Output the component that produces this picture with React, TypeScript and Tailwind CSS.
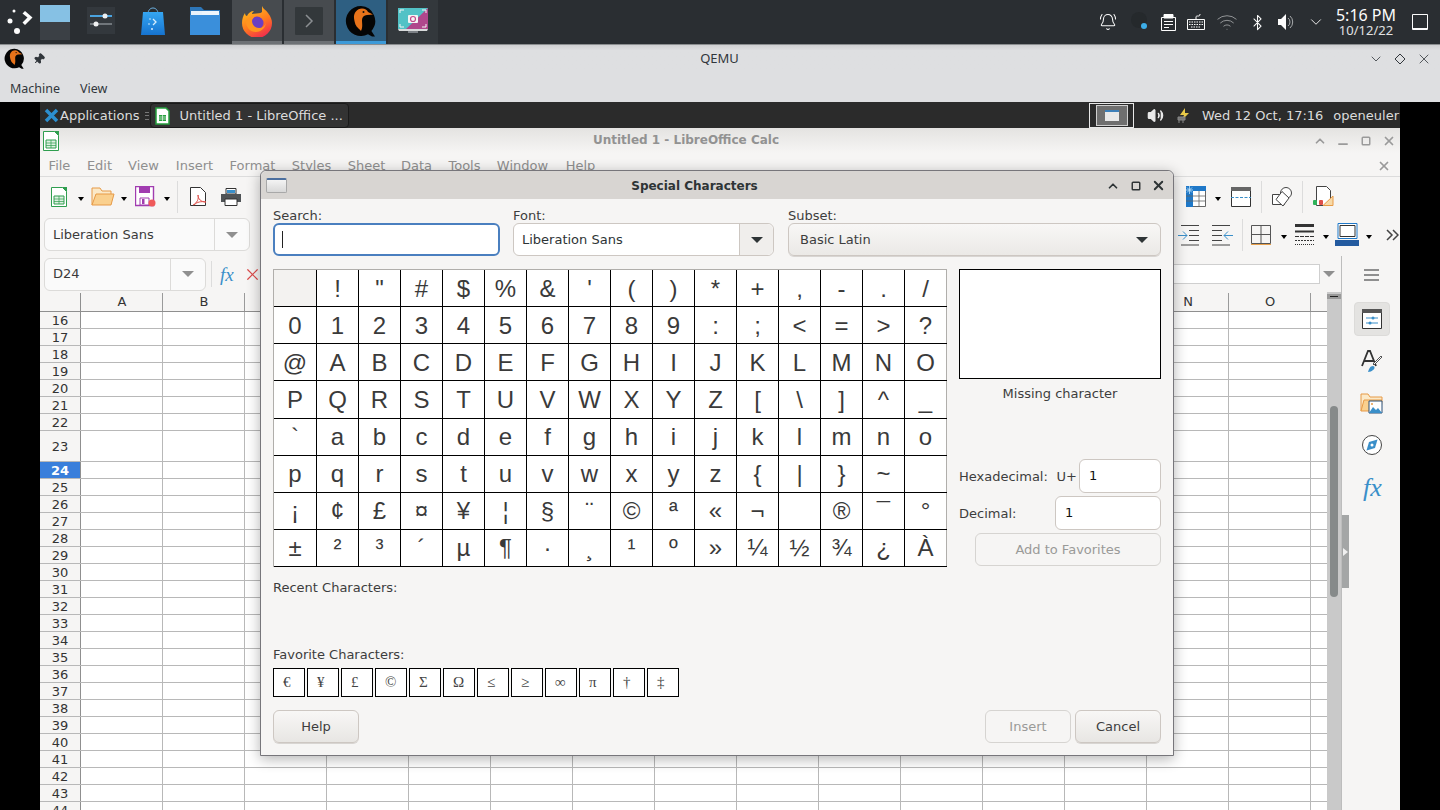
import { BellRing, Bluetooth, ChevronDown, ChevronUp, Minus, Pin, Square, Volume2, Wifi, X } from 'lucide-react'

const UI = "font-['DejaVu_Sans',sans-serif]"
const NOTO = "font-['Noto_Sans',sans-serif]"
const CHAR = "font-['Liberation_Sans',sans-serif]"
const SERIF = "font-['Liberation_Serif',serif]"

const CHAR_ROWS = [
  [' ', '!', '"', '#', '$', '%', '&', "'", '(', ')', '*', '+', ',', '-', '.', '/'],
  ['0', '1', '2', '3', '4', '5', '6', '7', '8', '9', ':', ';', '<', '=', '>', '?'],
  ['@', 'A', 'B', 'C', 'D', 'E', 'F', 'G', 'H', 'I', 'J', 'K', 'L', 'M', 'N', 'O'],
  ['P', 'Q', 'R', 'S', 'T', 'U', 'V', 'W', 'X', 'Y', 'Z', '[', '\\', ']', '^', '_'],
  ['`', 'a', 'b', 'c', 'd', 'e', 'f', 'g', 'h', 'i', 'j', 'k', 'l', 'm', 'n', 'o'],
  ['p', 'q', 'r', 's', 't', 'u', 'v', 'w', 'x', 'y', 'z', '{', '|', '}', '~', ' '],
  ['¡', '¢', '£', '¤', '¥', '¦', '§', '¨', '©', 'ª', '«', '¬', ' ', '®', '¯', '°'],
  ['±', '²', '³', '´', 'µ', '¶', '·', '¸', '¹', 'º', '»', '¼', '½', '¾', '¿', 'À'],
]
const FAVORITES = ['€', '¥', '£', '©', 'Σ', 'Ω', '≤', '≥', '∞', 'π', '†', '‡']
const COLUMNS = ['A', 'B', 'C', 'D', 'E', 'F', 'G', 'H', 'I', 'J', 'K', 'L', 'M', 'N', 'O', '']
const ROWS = Array.from({ length: 29 }, (_, i) => i + 16)
const MENU = [
  ['File', 'w-[39px]'],
  ['Edit', 'w-[41px]'],
  ['View', 'w-[47px]'],
  ['Insert', 'w-[55px]'],
  ['Format', 'w-[61px]'],
  ['Styles', 'w-[57px]'],
  ['Sheet', 'w-[53px]'],
  ['Data', 'w-[47px]'],
  ['Tools', 'w-[49px]'],
  ['Window', 'w-[67px]'],
  ['Help', 'w-[49px]'],
]

function QemuLogo({ size }: { size: number }) {
  return (
    <svg width={size} height={size} viewBox="0 0 32 32">
      <path d="M16 1a15 15 0 1 0 7 28.200l4 2.300h3l-3.600-5.600A15 15 0 0 0 16 1z" fill="#050505" />
      <path d="M9 13c-.5-5 3-9.500 8-9.500 3 0 5 1.500 6 3.500l5 2.500-6 .5c-3 .5-5 2-5 5 0 4 1 7-1 11-2-2.500-5-4-6-8-.6-2-.8-3.500-1-5z" fill="#e8731a" />
      <circle cx="18.500" cy="7" r="1" fill="#111" />
    </svg>
  )
}

function Launcher() {
  return (
    <svg width="32" height="32" viewBox="0 0 32 32" fill="#fcfcfc">
      <circle cx="10" cy="5" r="1.500" />
      <circle cx="6" cy="15" r="2.500" />
      <circle cx="13" cy="25" r="3" />
      <path d="M18.500 7.500 21 5l7.500 6.500-7.500 7.500-2.500-2.500 5-5z" />
    </svg>
  )
}

function Pager() {
  return (
    <div className="flex h-[35px] w-[30px] flex-col">
      <div className="h-[17px] bg-[#86c1e4]" />
      <div className="flex-1 bg-[#3b4045]" />
    </div>
  )
}

function SettingsIcon() {
  return (
    <svg width="30" height="30" viewBox="0 0 30 30">
      <rect x="1" y="1" width="28" height="27" fill="#33383d" />
      <path d="M4 10h22" stroke="#4aa3e0" strokeWidth="2" />
      <path d="M4 18h22" stroke="#70767b" strokeWidth="2" />
      <circle cx="19" cy="10" r="2.500" fill="#eff0f1" />
      <circle cx="10" cy="18" r="2.500" fill="#eff0f1" />
    </svg>
  )
}

function StoreIcon() {
  return (
    <svg width="26" height="30" viewBox="0 0 26 30">
      <defs>
        <linearGradient id="bag" x1="0" y1="0" x2="0" y2="1">
          <stop offset="0" stopColor="#35a6f2" />
          <stop offset="1" stopColor="#1673cf" />
        </linearGradient>
      </defs>
      <path d="M8 8c0-8 10-8 10 0" fill="none" stroke="#6fb6e8" strokeWidth="1" />
      <path d="M3 6h20l2 23H1z" fill="url(#bag)" />
      <path d="m13 13 3 3-3 3" fill="none" stroke="#d8eefc" strokeWidth="1.300" />
      <circle cx="10" cy="13" r=".8" fill="#d8eefc" />
      <circle cx="9" cy="18" r=".8" fill="#d8eefc" />
      <circle cx="12" cy="23" r="1" fill="#d8eefc" />
    </svg>
  )
}

function FolderIcon() {
  return (
    <svg width="32" height="30" viewBox="0 0 32 30">
      <path d="M1 1h11l3 3h16v25H1z" fill="#2d76b8" />
      <rect x="2" y="5" width="28" height="5" fill="#e9f3fb" />
      <path d="M1 9h12l2-2h16v22H1z" fill="#3a8fdb" />
      <rect x="13" y="5" width="17" height="4" fill="#eef6fc" />
    </svg>
  )
}

function FirefoxIcon() {
  return (
    <svg width="32" height="32" viewBox="0 0 32 32">
      <defs>
        <linearGradient id="fx" x1="0.2" y1="0" x2="0.7" y2="1">
          <stop offset="0" stopColor="#ffc21c" />
          <stop offset="0.55" stopColor="#ff7a1f" />
          <stop offset="1" stopColor="#f2294f" />
        </linearGradient>
      </defs>
      <path d="M21 1c1 3 4 4 6 7 3 4 4 7 4 10a15 15 0 0 1-30 0c0-4 1-7 3-10 0 2 1 3 2 3 1-3 4-5 7-5-1 1-2 2-2 3 4-1 8 0 10-2 0-2 0-4 0-6z" fill="url(#fx)" />
      <circle cx="16" cy="18" r="6.500" fill="#6b3fc2" />
      <path d="M5 17c2-4 5-6 10-6-2 1-4 3-4 5 0 4 3 7 7 7 3 0 6-2 7-5-1 6-6 9-10 9-6 0-10-5-10-10z" fill="#ff9520" />
    </svg>
  )
}

function KonsoleIcon() {
  return (
    <svg width="30" height="30" viewBox="0 0 30 30">
      <rect x="1" y="1" width="28" height="28" rx="1" fill="#33383b" />
      <path d="m12 9 6 6-6 6" fill="none" stroke="#8b8f92" strokeWidth="1.500" />
    </svg>
  )
}

function SpectacleIcon() {
  return (
    <svg width="32" height="28" viewBox="0 0 32 28">
      <rect x="1" y="1" width="30" height="21" fill="#52c2c6" />
      <path d="M31 1v21H9z" fill="#b0478c" />
      <path d="M1 22h30l-1 2H2z" fill="#d8dadb" />
      <path d="M11 24h10v2H11z" fill="#7b8085" />
      <path d="M3 6V3h4M25 3h4v3M3 17v3h4M29 17v3h-4" fill="none" stroke="#f4f4f4" />
      <rect x="11" y="8" width="10" height="8" rx="1" fill="#f4f4f4" />
      <circle cx="16" cy="12" r="2.500" fill="none" stroke="#c24a8a" strokeWidth="1.200" />
    </svg>
  )
}

function DockItem({ kind, children }: { kind?: 'open' | 'active' | 'idle'; children: React.ReactNode }) {
  let cls = 'border-b-[3px] border-transparent'
  if (kind === 'open') cls = 'bg-[#474b4f] border-b-[3px] border-[#6d7175]'
  if (kind === 'active') cls = 'bg-[#2e5f82] border-b-[3px] border-[#3d9ad8]'
  if (kind === 'idle') cls = 'bg-[#33383c] border-b-[3px] border-transparent'
  return <div className={`mx-px flex h-11 w-[50px] items-center justify-center ${cls}`}>{children}</div>
}

function TopPanel() {
  return (
    <div className="flex h-[45px] shrink-0 items-center bg-[#2a2e32] border-b border-[#8b8e90] text-[#fcfcfc]">
      <div className="flex w-10 justify-center"><Launcher /></div>
      <div className="flex w-[35px]"><Pager /></div>
      <DockItem><SettingsIcon /></DockItem>
      <DockItem><StoreIcon /></DockItem>
      <DockItem><FolderIcon /></DockItem>
      <DockItem kind="open"><FirefoxIcon /></DockItem>
      <DockItem kind="open"><KonsoleIcon /></DockItem>
      <DockItem kind="active"><QemuLogo size={32} /></DockItem>
      <DockItem kind="idle"><SpectacleIcon /></DockItem>
      <div className="ml-auto flex items-center">
        <div className="flex w-[30px] justify-center"><BellRing size={18} strokeWidth={1.4} /></div>
        <div className="relative flex h-5 w-8 justify-center">
          <span className="h-4 w-4 rounded-full bg-[#25292c]" />
          <span className="absolute left-[18px] top-[11px] h-[6px] w-[6px] rounded-full bg-[#3daee9]" />
        </div>
        <div className="flex w-[26px] justify-center">
          <svg width="15" height="17" viewBox="0 0 15 17" fill="none" stroke="#fcfcfc">
            <path d="M.5 3.500h14v13H.5z" />
            <path d="M3 .5h9V4H3z" fill="#fcfcfc" />
            <path d="M3 7.500h9M3 10.500h9M3 13.500h5" />
          </svg>
        </div>
        <div className="flex w-[30px] justify-center">
          <svg width="18" height="16" viewBox="0 0 18 16" fill="none" stroke="#fcfcfc">
            <path d="M.5 5.500h17v10H.5z" />
            <path d="M9 5V3c0-1 1-1 2-1s2 0 2-2" />
            <path d="M2 8h14M2 10.500h14M4 13h10" strokeDasharray="1.500 1" />
          </svg>
        </div>
        <div className="flex w-[31px] justify-center"><Wifi size={22} strokeWidth={1} className="text-[#9a9d9f]" /></div>
        <div className="flex w-[30px] justify-center"><Bluetooth size={17} strokeWidth={1.5} /></div>
        <div className="flex w-[29px] justify-center">
          <svg width="17" height="16" viewBox="0 0 17 16">
            <path d="M0 5h3l5-5v16l-5-5H0z" fill="#fcfcfc" />
            <path d="M10 4a5 5 0 0 1 0 8M12 2a8 8 0 0 1 0 12" fill="none" stroke="#a8abad" />
          </svg>
        </div>
        <div className="mr-[6px] flex w-[29px] justify-center"><ChevronDown size={18} strokeWidth={1.2} /></div>
        <div className={`flex w-[60px] shrink-0 flex-col items-center whitespace-nowrap leading-none ${NOTO}`}>
          <span className="text-[16px] leading-[17px]">5:16 PM</span>
          <span className="text-[13px] leading-[13px] text-[#e0e1e2]">10/12/22</span>
        </div>
        <div className="ml-[16px] mr-[12px] h-4 w-4 rounded-[1px] border border-b-2 border-[#fcfcfc]" />
      </div>
    </div>
  )
}

function QemuBar() {
  return (
    <div className={`flex h-[57px] shrink-0 flex-col bg-[#dedfe1] text-[#31363b] ${NOTO}`}>
      <div className="flex h-[27px] items-center bg-gradient-to-b from-[#cfd0d2] from-0% to-[#dedfe1] to-20%">
        <div className="ml-1 flex items-center gap-2">
          <QemuLogo size={21} />
          <Pin size={12} className="rotate-45 fill-[#31363b]" />
        </div>
        <span className="flex-1 pl-[26px] text-center text-[13px]">QEMU</span>
        <div className="mr-2 flex items-center gap-[8px]">
          <ChevronDown size={16} strokeWidth={1.2} />
          <svg width="16" height="14" viewBox="0 0 16 14" fill="none" stroke="#31363b"><path d="M8 2l5 5-5 5-5-5z" /></svg>
          <X size={16} strokeWidth={1.2} />
        </div>
      </div>
      <div className="flex flex-1 items-center gap-[20px] px-[10px] pt-[4px] text-[12.5px]">
        <span>Machine</span>
        <span>View</span>
      </div>
    </div>
  )
}

function XfcePanel() {
  return (
    <div className={`flex h-[26px] shrink-0 items-center bg-[#2b2b2b] pt-px text-[13px] text-[#dcdcdc] ${UI}`}>
      <svg className="ml-[4px]" width="15" height="15" viewBox="0 0 15 15">
        <path d="M2 2l11 11M13 2 2 13" stroke="#2c8fd0" strokeWidth="3.500" />
      </svg>
      <span className="ml-[1px]">Applications</span>
      <div className="ml-[6px] flex h-[8px] w-[4px] flex-col justify-between">
        <div className="h-px bg-[#777]" />
        <div className="h-px bg-[#777]" />
        <div className="h-px bg-[#777]" />
      </div>
      <div className="ml-[1px] flex h-[25px] w-[199px] items-center rounded border border-[#1a1a1a] bg-[#333]">
        <svg className="ml-[4px]" width="15" height="18" viewBox="0 0 15 18">
          <path d="M1 1h10l3 3v13H1z" fill="#fff" stroke="#27a03f" strokeWidth="1.500" />
          <path d="M4 8h7v6H4z" fill="#27a03f" />
          <path d="M4 10h7M4 12h7M7.500 8v6" stroke="#fff" strokeWidth=".6" />
        </svg>
        <span className="ml-[9px]">Untitled 1 - LibreOffice ...</span>
      </div>
      <div className="ml-auto flex items-center pr-[1px]">
        <div className="mr-[13px] flex h-[25px] w-[45px] items-center justify-center border border-[#e8e8e8]">
          <div className="flex h-[21px] w-[32px] items-center justify-center border border-[#d0d0d0] bg-[#6f6f6f]">
            <div className="h-[11px] w-[14px] border-t-2 border-[#3d7fb8] bg-[#e8e8e8]" />
          </div>
        </div>
        <Volume2 size={17} className="fill-[#e8e8e8] text-[#e8e8e8]" />
        <svg className="ml-[12px]" width="15" height="16" viewBox="0 0 15 16">
          <path d="M9 0 4 7h4L6 12l7-7H9z" fill="#e8c948" />
          <path d="M2 9h7v3H2zM3 12v3M7 12v3" stroke="#888" fill="#777" />
        </svg>
        <span className="ml-[11px]">Wed 12 Oct, 17:16</span>
        <span className="ml-[10px]">openeuler</span>
      </div>
    </div>
  )
}

function Caret({ className }: { className: string }) {
  return <span className={`h-0 w-0 translate-y-[2px] border-x-[3.500px] border-t-[4px] border-x-transparent border-t-black ${className}`} />
}

function Sep({ className }: { className: string }) {
  return <div className={`h-[32px] w-px bg-[#dcdcdc] ${className}`} />
}

function CalcDoc({ w = 16 }: { w?: number }) {
  return (
    <svg width={w} height={w + 4} viewBox="0 0 16 20">
      <path d="M.5.5h11l4 4v15H.5z" fill="#fff" stroke="#2f9e4f" />
      <path d="M11 0h5v5z" fill="#2f9e4f" />
      <path d="M3 9h10v8H3z" fill="#dff0e2" stroke="#2f9e4f" />
      <path d="M3 12h10M3 14.500h10M8 9v8" stroke="#2f9e4f" strokeWidth=".7" />
    </svg>
  )
}

function FolderOpen() {
  return (
    <svg width="24" height="19" viewBox="0 0 24 19">
      <path d="M1 18V1h8l2 3h9v3" fill="#fbe9c8" stroke="#e79a46" />
      <path d="M1 18 5 7h18l-3 11z" fill="#fad08e" stroke="#e79a46" />
    </svg>
  )
}

function SaveIcon() {
  return (
    <svg width="22" height="22" viewBox="0 0 22 22">
      <path d="M.5.5h18v19H.5z" fill="#fff" stroke="#a13cb0" strokeWidth="1.400" />
      <path d="M4 1h11v6H4z" fill="#a13cb0" />
      <path d="M5 12h9v7H5z" fill="#fff" stroke="#a13cb0" />
      <rect x="7" y="13" width="2.500" height="5" fill="#a13cb0" />
      <circle cx="17" cy="17" r="3.500" fill="#ef5a5a" />
    </svg>
  )
}

function PdfIcon() {
  return (
    <svg width="17" height="20" viewBox="0 0 17 20">
      <path d="M.5.5h10l5 5v13H.5z" fill="#fff" stroke="#333" />
      <path d="M3 18c4-2 6-6 5-10 0 4 3 7 8 7-5-1-9 0-12 3" fill="none" stroke="#e0504a" />
    </svg>
  )
}

function PrintIcon() {
  return (
    <svg width="20" height="18" viewBox="0 0 20 18">
      <path d="M5 .5h10V6H5z" fill="#fff" stroke="#333" />
      <path d="M6 2h8v3H6z" fill="#3a8fc9" />
      <path d="M0 6h20v8H0z" fill="#4f5356" />
      <path d="M4 11h12v6.500H4z" fill="#fff" stroke="#333" />
    </svg>
  )
}

function FreezeIcon() {
  return (
    <svg width="20" height="21" viewBox="0 0 20 21">
      <path d="M.5.5h19v20H.5z" fill="#fff" stroke="#666" />
      <path d="M0 0h7v21H0zM0 0h20v5H0z" fill="#1f78c8" />
      <path d="M7 10h13M7 15h13M13 5v16M0 10h7M0 15h7" stroke="#666" strokeWidth=".8" />
      <path d="M3.500 0v8M0 4h7M1 1.500l5 5M6 1.500l-5 5" stroke="#bfe3fb" strokeWidth=".8" />
    </svg>
  )
}

function PageBreakIcon() {
  return (
    <svg width="20" height="20" viewBox="0 0 20 20">
      <path d="M.5.5h19v19H.5z" fill="#fff" stroke="#333" />
      <path d="M0 0h20v4H0z" fill="#666" />
      <path d="M0 10.500h20" stroke="#3a8fc9" strokeDasharray="3 1.500" />
    </svg>
  )
}

function ShapesIcon() {
  return (
    <svg width="21" height="20" viewBox="0 0 21 20" fill="#fff" stroke="#444">
      <circle cx="14" cy="6" r="5.500" />
      <path d="M.5 7.500h12v10H.5z" />
      <path d="M10 4.500l7 6.500-6 8-7-6.500z" />
    </svg>
  )
}

function MacroIcon() {
  return (
    <svg width="21" height="21" viewBox="0 0 21 21">
      <path d="M3.500.5h10l4 4v15h-14z" fill="#fff" stroke="#444" />
      <rect x="0" y="14" width="4" height="5" rx="1" fill="#2fb35a" />
      <rect x="6" y="14" width="4" height="5" rx="1" fill="#e0504a" />
      <path d="M10 19.500 20 10v9.500z" fill="#f7d9a7" stroke="#e79a46" />
    </svg>
  )
}

function IndentIcon({ flip }: { flip?: boolean }) {
  return (
    <svg width="22" height="22" viewBox="0 0 22 22" fill="none" stroke="#444" className={flip ? '-scale-x-100' : ''}>
      <path d="M3 1.500h18M11 6.500h10M11 11.500h10M11 16.500h10M3 21h18" />
      <path d="M0 11.500h9M5 7.500l4 4-4 4" stroke="#3a8fc9" />
    </svg>
  )
}

function BordersIcon() {
  return (
    <svg width="20" height="20" viewBox="0 0 20 20" fill="none" stroke="#555">
      <path d="M.5.5h19v18H.5zM10 0v19M0 9.500h20" />
      <path d="M0 19.500h20" stroke="#e8a04a" />
    </svg>
  )
}

function LineStyleIcon() {
  return (
    <svg width="19" height="21" viewBox="0 0 19 21" stroke="#333" fill="none">
      <path d="M0 1.500h19" strokeWidth="3" />
      <path d="M0 7.500h19" strokeWidth="2" />
      <path d="M0 12.500h19" strokeDasharray="4 1" />
      <path d="M0 16.500h19" strokeDasharray="2 1" />
      <path d="M0 20.500h19" strokeDasharray="1 1" />
    </svg>
  )
}

function BorderColorIcon() {
  return (
    <svg width="24" height="23" viewBox="0 0 24 23">
      <path d="M3 .5h19v15H3z" fill="#fff" stroke="#1f78c8" />
      <path d="M5 2.500h15v11H5z" fill="none" stroke="#333" />
      <rect x="0" y="17" width="24" height="6" fill="#235a9f" />
    </svg>
  )
}

function Toolbars() {
  return (
    <>
      <div className="flex h-[40px] shrink-0 items-center border-t border-[#dcdcdc] pl-[11px]">
        <CalcDoc />
        <Caret className="ml-[11px]" />
        <span className="ml-[7px] flex"><FolderOpen /></span>
        <Caret className="ml-[6px]" />
        <span className="ml-[8px] flex"><SaveIcon /></span>
        <Caret className="ml-[7px]" />
        <Sep className="ml-[7px]" />
        <span className="ml-[12px] flex"><PdfIcon /></span>
        <span className="ml-[14px] flex"><PrintIcon /></span>
        <div className="ml-auto mr-[66px] flex items-center">
          <FreezeIcon />
          <Caret className="ml-[9px]" />
          <span className="ml-[10px] flex"><PageBreakIcon /></span>
          <Sep className="ml-[10px]" />
          <span className="ml-[10px] flex"><ShapesIcon /></span>
          <Sep className="ml-[9px]" />
          <span className="ml-[10px] flex"><MacroIcon /></span>
        </div>
      </div>
      <div className="flex h-[40px] shrink-0 items-start pl-[4px] pt-[2px]">
        <div className={`flex h-[33px] w-[206px] items-center rounded-md border border-[#dcdbd9] bg-[#fafafa] text-[13px] text-[#3a3a3a] ${UI}`}>
          <span className="flex-1 pl-[8px]">Liberation Sans</span>
          <div className="flex h-full w-[35px] items-center justify-center border-l border-[#dcdbd9]">
            <span className="h-0 w-0 border-x-[6px] border-t-[6px] border-x-transparent border-t-[#8f8f8f]" />
          </div>
        </div>
        <div className="ml-auto mr-[1px] flex h-[33px] items-center">
          <IndentIcon />
          <span className="ml-[11px] flex"><IndentIcon flip /></span>
          <Sep className="ml-[9px]" />
          <span className="ml-[8px] flex"><BordersIcon /></span>
          <Caret className="ml-[10px]" />
          <span className="ml-[8px] flex"><LineStyleIcon /></span>
          <Caret className="ml-[9px]" />
          <span className="ml-[6px] flex"><BorderColorIcon /></span>
          <Caret className="ml-[7px]" />
          <svg className="ml-[14px]" width="13" height="12" viewBox="0 0 13 12" fill="none" stroke="#444" strokeWidth="1.500"><path d="m1 1 5 5-5 5M7 1l5 5-5 5" /></svg>
        </div>
      </div>
    </>
  )
}

function FormulaBar() {
  return (
    <div className="flex h-[36px] shrink-0 items-center pl-[4px] pr-[1px]">
      <div className={`flex h-[33px] w-[162px] items-center rounded-md border border-[#dcdbd9] bg-[#fafafa] text-[13px] text-[#3a3a3a] ${UI}`}>
        <span className="flex-1 pl-[8px]">D24</span>
        <div className="flex h-full w-[35px] items-center justify-center border-l border-[#dcdbd9]">
          <span className="h-0 w-0 border-x-[6px] border-t-[6px] border-x-transparent border-t-[#8f8f8f]" />
        </div>
      </div>
      <div className="ml-[5px] h-[26px] w-px bg-[#dcdcdc]" />
      <span className={`ml-[8px] text-[19px] italic leading-none text-[#3a8fc9] ${SERIF}`}>fx</span>
      <X size={19} className="ml-[9px] text-[#dc4a4a]" strokeWidth={1.5} />
      <div className="ml-auto h-[20px] w-[150px] border border-[#cfcfcf] bg-white" />
      <span className="ml-[3px] mr-[5px] h-0 w-0 border-x-[6px] border-t-[6px] border-x-transparent border-t-[#8f8f8f]" />
    </div>
  )
}

function SheetGrid() {
  return (
    <div className={`flex min-h-0 flex-1 overflow-hidden ${UI}`}>
      <div className="min-w-0 flex-1 overflow-hidden bg-white">
        <div className="flex h-[20px] border-b border-[#8f8f8f] bg-[#f6f5f4] pt-px text-[13px] leading-[18px] text-[#333]">
          <div className="w-[41px] shrink-0 border-r border-[#8f8f8f]" />
          {COLUMNS.map((c, i) => (
            <div key={i} className="w-[82px] shrink-0 border-r border-[#9a9a9a] pl-px text-center">{c}</div>
          ))}
        </div>
        {ROWS.map((r) => (
          <div key={r} className={`flex border-b border-[#b8b8b8] ${r === 23 ? 'h-[31px]' : 'h-[17px]'}`}>
            <div
              className={`flex w-[41px] shrink-0 items-center justify-center border-r border-[#8f8f8f] text-[13px] leading-none ${
                r === 24 ? 'bg-[#3a7fdb] font-bold text-white' : 'bg-[#f6f5f4] text-[#333]'
              }`}
            >
              {r}
            </div>
            {COLUMNS.map((c, i) => (
              <div key={i} className="w-[82px] shrink-0 border-r border-[#b8b8b8]" />
            ))}
          </div>
        ))}
      </div>
      <div className="flex w-[14px] shrink-0 flex-col items-center bg-[#c9c9c9]">
        <div className="mt-[2px] flex h-[5px] w-full items-center justify-center bg-[#9a9a9a]">
          <div className="h-px w-[8px] bg-[#222]" />
        </div>
        <div className="mt-[107px] h-[191px] w-[8px] rounded bg-[#868a8a]" />
      </div>
    </div>
  )
}

function Sidebar() {
  return (
    <div className="relative flex w-[59px] shrink-0 flex-col items-center border-l border-[#bdbdbd] pl-[1px]">
      <div className="mt-[13px] flex w-[15px] flex-col gap-[3px]">
        <div className="h-[2px] bg-[#8f8f8f]" />
        <div className="h-[2px] bg-[#8f8f8f]" />
        <div className="h-[2px] bg-[#8f8f8f]" />
      </div>
      <div className="mt-[21px] flex h-[34px] w-9 items-center justify-center rounded border border-[#dcdbd9] bg-[#e4e3e1]">
        <svg width="20" height="20" viewBox="0 0 20 20">
          <path d="M.5.5h19v19H.5z" fill="#fff" stroke="#333" />
          <path d="M0 0h20v4H0z" fill="#555" />
          <path d="M4 9h12M4 14h12" stroke="#3a8fc9" />
          <circle cx="11" cy="9" r="1.500" fill="#3a8fc9" />
          <circle cx="8" cy="14" r="1.500" fill="#3a8fc9" />
        </svg>
      </div>
      <svg className="mt-[14px]" width="22" height="23" viewBox="0 0 22 23">
        <path d="M1 16 7 1h2l6 15M3.500 11h9" fill="none" stroke="#333" strokeWidth="1.800" />
        <path d="m21 7-8 8-1-1 8-8z" fill="#fff" stroke="#555" />
        <path d="M7 22c1-3 2-6 5-6 2 0 2 3 0 4-1 1-3 2-5 2z" fill="#3a8fc9" />
      </svg>
      <svg className="mt-[20px]" width="23" height="21" viewBox="0 0 23 21">
        <path d="M1 18V1h7l2 3h12v3" fill="#fbe9c8" stroke="#e79a46" />
        <path d="M1 18 4 7h18l-1 11z" fill="#fad08e" stroke="#e79a46" />
        <path d="M9 8h13v12H9z" fill="#fff" stroke="#2a4f74" />
        <path d="M9 20l4-6 3 3 2-2 4 5z" fill="#3a8fc9" />
        <circle cx="12" cy="11" r="1" fill="#e79a46" />
      </svg>
      <svg className="mt-[21px]" width="20" height="20" viewBox="0 0 20 20">
        <circle cx="10" cy="10" r="9.500" fill="#fff" stroke="#444" />
        <path d="M15.500 4.500 13 13l-8.500 2.500L7 7z" fill="#3a8fc9" />
        <circle cx="10" cy="10" r="1.500" fill="#fff" />
      </svg>
      <span className={`ml-[2px] mt-[17px] text-[26px] italic leading-[32px] text-[#3a8fc9] ${SERIF}`}>fx</span>
      <div className="absolute left-0 top-[259px] flex h-[73px] w-[7px] items-center justify-center bg-[#a4a6a6]">
        <span className="h-0 w-0 border-y-[4px] border-l-[5px] border-y-transparent border-l-[#f0f0f0]" />
      </div>
    </div>
  )
}

function WinTitle() {
  return (
    <div className="flex h-[25px] shrink-0 items-center bg-gradient-to-b from-[#e4e3e1] to-[#f6f5f4]">
      <span className="ml-[3px] flex"><CalcDoc /></span>
      <span className={`flex-1 pb-[2px] text-center text-[12px] font-bold text-[#929292] ${UI}`}>Untitled 1 - LibreOffice Calc</span>
      <div className="mr-[4px] flex items-center gap-[9px] text-[#9a9a9a]">
        <ChevronUp size={14} strokeWidth={3} />
        <Minus size={14} strokeWidth={3} className="translate-y-[3px]" />
        <Square size={10} strokeWidth={3.5} className="mx-[2px]" />
        <X size={14} strokeWidth={3} />
      </div>
    </div>
  )
}

function CalcWindow() {
  return (
    <div className="flex min-h-0 flex-1 flex-col overflow-hidden bg-[#f6f5f4]">
      <WinTitle />
      <div className={`flex h-[23px] shrink-0 items-center pt-[2px] text-[13px] text-[#8f8f8f] ${UI}`}>
        {MENU.map(([label, w]) => (
          <span key={label} className={`text-center ${w}`}>{label}</span>
        ))}
        <X size={14} strokeWidth={3} className="ml-auto mr-[9px] text-[#9a9a9a]" />
      </div>
      <Toolbars />
      <div className="flex min-h-0 flex-1">
        <div className="flex min-w-0 flex-1 flex-col">
          <FormulaBar />
          <SheetGrid />
        </div>
        <Sidebar />
      </div>
    </div>
  )
}

function FieldLabel({ children }: { children: React.ReactNode }) {
  return <span className="block h-[17px] leading-[19px] text-[#3d3d3d]">{children}</span>
}

function DialogButton({ label, width, disabled, className = '' }: { label: string; width: string; disabled?: boolean; className?: string }) {
  return (
    <div
      className={`flex h-[33px] items-center justify-center rounded-md border ${width} ${className} ${
        disabled
          ? 'border-[#d6d4d1] bg-[#f6f5f4] text-[#9a9a98]'
          : 'border-[#cdc7c2] bg-gradient-to-b from-[#f8f7f6] to-[#e8e6e3] text-[#3d3d3d] shadow-[0_1px_0_#d8d5d2]'
      }`}
    >
      {label}
    </div>
  )
}

function SpecialCharacters() {
  return (
    <div
      className={`absolute left-[260px] top-[170px] flex h-[586px] w-[914px] flex-col rounded-t-md border border-[#77767b] bg-[#f6f5f4] text-[13px] shadow-[0_3px_14px_rgba(0,0,0,0.3)] ${UI}`}
    >
      <div className="flex h-[28px] shrink-0 items-center rounded-t-md bg-[#d8d5d2] pt-px">
        <div className="ml-[5px] h-[15px] w-[21px] rounded-[2px] border border-[#a8a8a8] border-t-2 border-t-[#4c6f9f] bg-gradient-to-b from-[#f4f4f4] to-[#d8d8d8]" />
        <span className="flex-1 pr-[4px] text-center text-[12px] font-bold text-[#2e3436]">Special Characters</span>
        <div className="mr-[7px] flex items-center text-[#2e3436]">
          <ChevronUp size={14} strokeWidth={3} />
          <Square size={10} strokeWidth={3.5} className="ml-[11px] mr-[10px]" />
          <X size={15} strokeWidth={3} />
        </div>
      </div>

      <div className="flex flex-1 flex-col px-[12px]">
        <div className="mt-[7px] flex">
          <div className="mr-[13px] w-[227px]">
            <FieldLabel>Search:</FieldLabel>
            <div className="flex h-[33px] items-center rounded-md border-2 border-[#4a7fbf] bg-white pl-[7px]">
              <span className="h-[17px] w-px bg-[#222]" />
            </div>
          </div>
          <div className="mr-[14px] w-[261px]">
            <FieldLabel>Font:</FieldLabel>
            <div className="flex h-[33px] items-center rounded-md border border-[#cdc7c2] bg-white text-[#2e3436]">
              <span className="flex-1 pl-[8px]">Liberation Sans</span>
              <div className="flex h-full w-[34px] items-center justify-center rounded-r-md border-l border-[#cdc7c2] bg-[#f0eeec]">
                <span className="h-0 w-0 border-x-[6px] border-t-[6px] border-x-transparent border-t-[#2e3436]" />
              </div>
            </div>
          </div>
          <div className="w-[373px]">
            <FieldLabel>Subset:</FieldLabel>
            <div className="flex h-[33px] items-center rounded-md border border-[#cdc7c2] bg-gradient-to-b from-[#f8f7f6] to-[#ebe9e6] text-[#3d3d3d] shadow-[0_1px_0_#d8d5d2]">
              <span className="flex-1 pl-[11px] pt-px">Basic Latin</span>
              <span className="mr-[12px] h-0 w-0 border-x-[6px] border-t-[6px] border-x-transparent border-t-[#2e3436]" />
            </div>
          </div>
        </div>

        <div className="mt-[13px] flex">
          <div className={`w-[674px] border-l border-t border-[#b0aeab] bg-white text-[24px] text-[#3a3a3a] ${CHAR}`}>
            {CHAR_ROWS.map((row, i) => (
              <div key={i} className="flex h-[37.125px] border-b border-black">
                {row.map((ch, j) => (
                  <div
                    key={j}
                    className={`flex items-center justify-center pt-px leading-none ${j === 0 ? 'w-[43px]' : 'w-[42px]'} ${
                      j === 15 ? 'border-r border-[#b0aeab]' : 'border-r border-black'
                    } ${i === 0 && j === 0 ? 'bg-[#f3f2f0]' : ''}`}
                  >
                    {ch}
                  </div>
                ))}
              </div>
            ))}
          </div>

          <div className="ml-[12px] flex w-[202px] flex-col text-[#3d3d3d]">
            <div className="h-[110px] border border-black bg-white" />
            <span className="mt-[6px] text-center leading-[17px]">Missing character</span>
            <div className="mt-[57px] flex h-[34px] items-center">
              <span className="flex-1 pt-px">Hexadecimal:</span>
              <span className="mr-[2px] pt-px">U+</span>
              <div className="flex h-[34px] w-[82px] items-center rounded-md border border-[#cdc7c2] bg-white pl-[9px] text-[#111]">1</div>
            </div>
            <div className="mt-[3px] flex h-[34px] items-center">
              <span className="flex-1 pt-px">Decimal:</span>
              <div className="flex h-[34px] w-[106px] items-center rounded-md border border-[#cdc7c2] bg-white pl-[9px] text-[#111]">1</div>
            </div>
            <div className="mt-[3px] flex justify-end">
              <DialogButton label="Add to Favorites" width="w-[186px]" disabled className="pt-px" />
            </div>
          </div>
        </div>

        <span className="mt-[12px] h-[17px] leading-[17px] text-[#3d3d3d]">Recent Characters:</span>
        <span className="mt-[50px] h-[17px] leading-[17px] text-[#3d3d3d]">Favorite Characters:</span>
        <div className={`mt-[5px] flex gap-[2px] text-[15px] text-[#444] ${SERIF}`}>
          {FAVORITES.map((ch) => (
            <div key={ch} className="flex h-[29px] w-[32px] items-center justify-start border border-black bg-white pl-[9px]">
              {ch}
            </div>
          ))}
        </div>
        <div className="mt-[13px] flex items-center">
          <DialogButton label="Help" width="w-[86px]" />
          <div className="ml-auto flex gap-[4px]">
            <DialogButton label="Insert" width="w-[86px]" disabled />
            <DialogButton label="Cancel" width="w-[86px]" />
          </div>
        </div>
      </div>
    </div>
  )
}

export default function App() {
  return (
    <div className="relative flex h-[810px] w-[1440px] flex-col overflow-hidden bg-black">
      <TopPanel />
      <QemuBar />
      <div className="flex min-h-0 flex-1">
        <div className="w-10 shrink-0 bg-black" />
        <div className="flex min-w-0 flex-1 flex-col">
          <XfcePanel />
          <CalcWindow />
        </div>
        <div className="w-10 shrink-0 bg-black" />
      </div>
      <SpecialCharacters />
    </div>
  )
}
